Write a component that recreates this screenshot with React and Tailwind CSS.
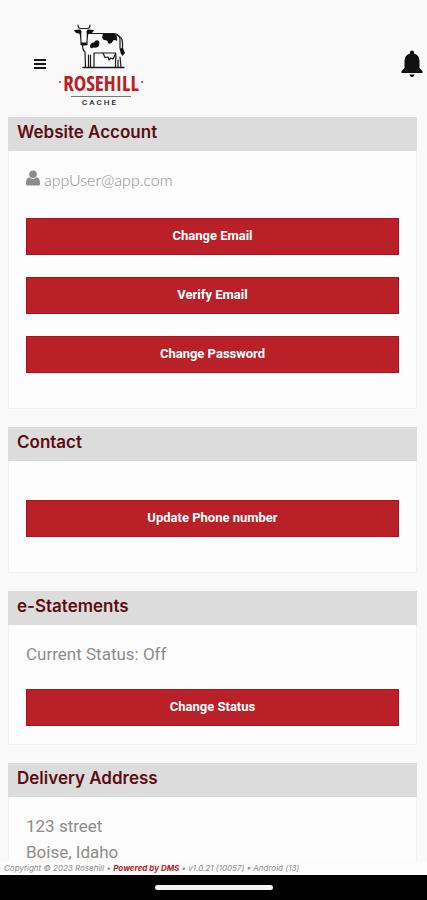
import React from "react";

function CowLogo() {
  return (
    <svg viewBox="0 0 86 86" className="h-[86px] w-[86px]" role="img" aria-label="Rosehill Cache">
      <g fill="none" stroke="#1a1a1a" strokeWidth="1.200" strokeLinecap="round" strokeLinejoin="round">
        <path d="M20 4 Q20 7.500 23 7.500 H29 Q32 7.500 32 4" />
        <path d="M22 9 L23 20 V23.500 H29 V20 L30 9" />
        <path d="M31 12.500 H56 Q61 13 62 18 V27 Q62 30 64 31" />
        <path d="M24.500 24 Q24.500 29 27 31 L27.500 46" />
        <path d="M30.500 46 V34 M32.500 46 V34 M36 46 V32 H57" />
        <path d="M45 32 L47 36.500 L50 36 L51 39 L53 37 L55 38 L57.500 33" />
        <path d="M57.500 32 Q58.500 36 57.500 40 V46 M60 46 V39 M63 46 L62 36" />
        <path d="M58 14 Q64.500 15 64.500 22 V29" />
        <path d="M25 46.500 H66" strokeWidth="1.400" />
      </g>
      <g fill="#111">
        <path d="M16 9 L21.500 8.500 L23.500 10 L23 17 L21.500 12.500 Q17.500 13 16 9Z" />
        <path d="M36 9 L30.500 8.500 L28.500 10 L29 17 L30.500 12.500 Q34.500 13 36 9Z" />
        <path d="M23 21.500 H29 L28.500 24.500 H23.500Z" />
        <path d="M45 13 H57 Q60 16 59 20 Q56 18 55 20 Q53 24 50 22 Q50 19 46 19 Q43 17 45 13Z" />
        <path d="M32 26 Q32 21.500 36 21.500 Q38 18 41 20 Q42 24 40 26 Q37 27 35 26.500 Q33 28 32 26Z" />
        <path d="M62.500 27 L65 27.500 L67 32 L64.500 35 L62.500 32Z" />
      </g>
      <text x="43" y="70" textAnchor="middle" fill="#b82026" className="font-['Open_Sans_Condensed','Roboto_Condensed','Liberation_Sans_Narrow',sans-serif] text-[21px] font-bold">
        ROSEHILL
      </text>
      <circle cx="2" cy="61" r="1" fill="#b82026" />
      <circle cx="84" cy="61" r="1" fill="#b82026" />
      <path d="M13 75.500 H73" stroke="#777" strokeWidth="1" />
      <text x="42" y="84" textAnchor="middle" fill="#222" className="font-['Roboto',sans-serif] text-[8px] font-medium tracking-[2px]">
        CACHE
      </text>
    </svg>
  );
}

function MenuIcon() {
  return (
    <svg viewBox="0 0 12 12" className="h-3 w-3" aria-hidden="true">
      <path d="M0 2 H12 M0 6 H12 M0 10 H12" stroke="#1a1a1a" strokeWidth="1.800" />
    </svg>
  );
}

function BellIcon() {
  return (
    <svg viewBox="0 0 22 28" className="h-7 w-[22px]" aria-hidden="true" fill="#111">
      <path d="M11 0.500 Q13 0.500 13 2.500 V3.500 Q18.500 5 18.500 11 V18 L21.500 21 V23 H0.500 V21 L3.500 18 V11 Q3.500 5 9 3.500 V2.500 Q9 0.500 11 0.500Z" />
      <path d="M8.500 24.500 H13.500 Q13 27 11 27 Q9 27 8.500 24.500Z" />
    </svg>
  );
}

function UserIcon() {
  return (
    <svg viewBox="0 0 14 16" className="mb-1 h-4 w-3.5" aria-hidden="true" fill="#8b8b8d">
      <circle cx="7" cy="4.200" r="3.800" />
      <path d="M3.200 7.300 Q7 10.500 10.800 7.300 Q14 8.500 14 12.500 V14 Q14 15.500 12.500 15.500 H1.500 Q0 15.500 0 14 V12.500 Q0 8.500 3.200 7.300Z" />
    </svg>
  );
}

function Card({ title, bodyClass, children }) {
  return (
    <section>
      <h2 className="flex h-[34px] items-center bg-[#dcdcdc] px-[9px] pb-1 font-['Inter',sans-serif] text-[17px] leading-6 font-semibold text-[#5c0d14]">
        {title}
      </h2>
      <div className={`border-x border-b border-[#f0f0f0] bg-[#fdfdfd] px-[17px] font-['Roboto',sans-serif] text-[17px] leading-[26px] text-[#8c8c8c] ${bodyClass}`}>
        {children}
      </div>
    </section>
  );
}

function ActionButton({ children }) {
  return (
    <button type="button" className="block h-[37px] w-full border border-[#b01219] bg-[#b92027] pb-0.5 font-['Roboto',sans-serif] text-[13px] leading-5 font-bold text-white">
      {children}
    </button>
  );
}

export default function App() {
  return (
    <div className="flex h-screen flex-col overflow-hidden bg-[#f9f9f9]">
      <header className="flex shrink-0 items-center justify-between pt-[21px] pr-1 pb-2.5 pl-[34px]">
        <div className="flex items-center gap-3">
          <button type="button" aria-label="Menu">
            <MenuIcon />
          </button>
          <CowLogo />
        </div>
        <button type="button" aria-label="Notifications">
          <BellIcon />
        </button>
      </header>

      <main className="flex min-h-0 flex-1 flex-col gap-[18px] overflow-hidden pr-2.5 pl-2">
        <Card title="Website Account" bodyClass="pt-4 pb-[35px]">
          <p className="flex items-center gap-1 font-['Lato',sans-serif] text-[16px] font-light">
            <UserIcon />
            appUser@app.com
          </p>
          <div className="mt-[25px] flex flex-col gap-[22px]">
            <ActionButton>Change Email</ActionButton>
            <ActionButton>Verify Email</ActionButton>
            <ActionButton>Change Password</ActionButton>
          </div>
        </Card>

        <Card title="Contact" bodyClass="pt-[39px] pb-[35px]">
          <ActionButton>Update Phone number</ActionButton>
        </Card>

        <Card title="e-Statements" bodyClass="pt-4 pb-[18px]">
          <p className="mb-[22px]">Current Status: Off</p>
          <ActionButton>Change Status</ActionButton>
        </Card>

        <Card title="Delivery Address" bodyClass="pt-4 pb-[18px]">
          <address className="not-italic">
            123 street
            <br />
            Boise, Idaho
          </address>
        </Card>
      </main>

      <footer className="h-3.5 shrink-0 bg-[#fcfcfc] px-1 font-['Inter',sans-serif] text-[8px] leading-[14px] whitespace-nowrap text-[#8c8c8c] italic">
        Copyright © 2023 Rosehill • <a href="#dms" className="font-bold text-[#b92027]">Powered by DMS</a> • v1.0.21 (10057) • Android (13)
      </footer>
      <div className="flex h-[25px] shrink-0 items-center justify-center bg-black">
        <div className="h-[5px] w-[118px] rounded-full bg-[#f2f2f2]" />
      </div>
    </div>
  );
}
